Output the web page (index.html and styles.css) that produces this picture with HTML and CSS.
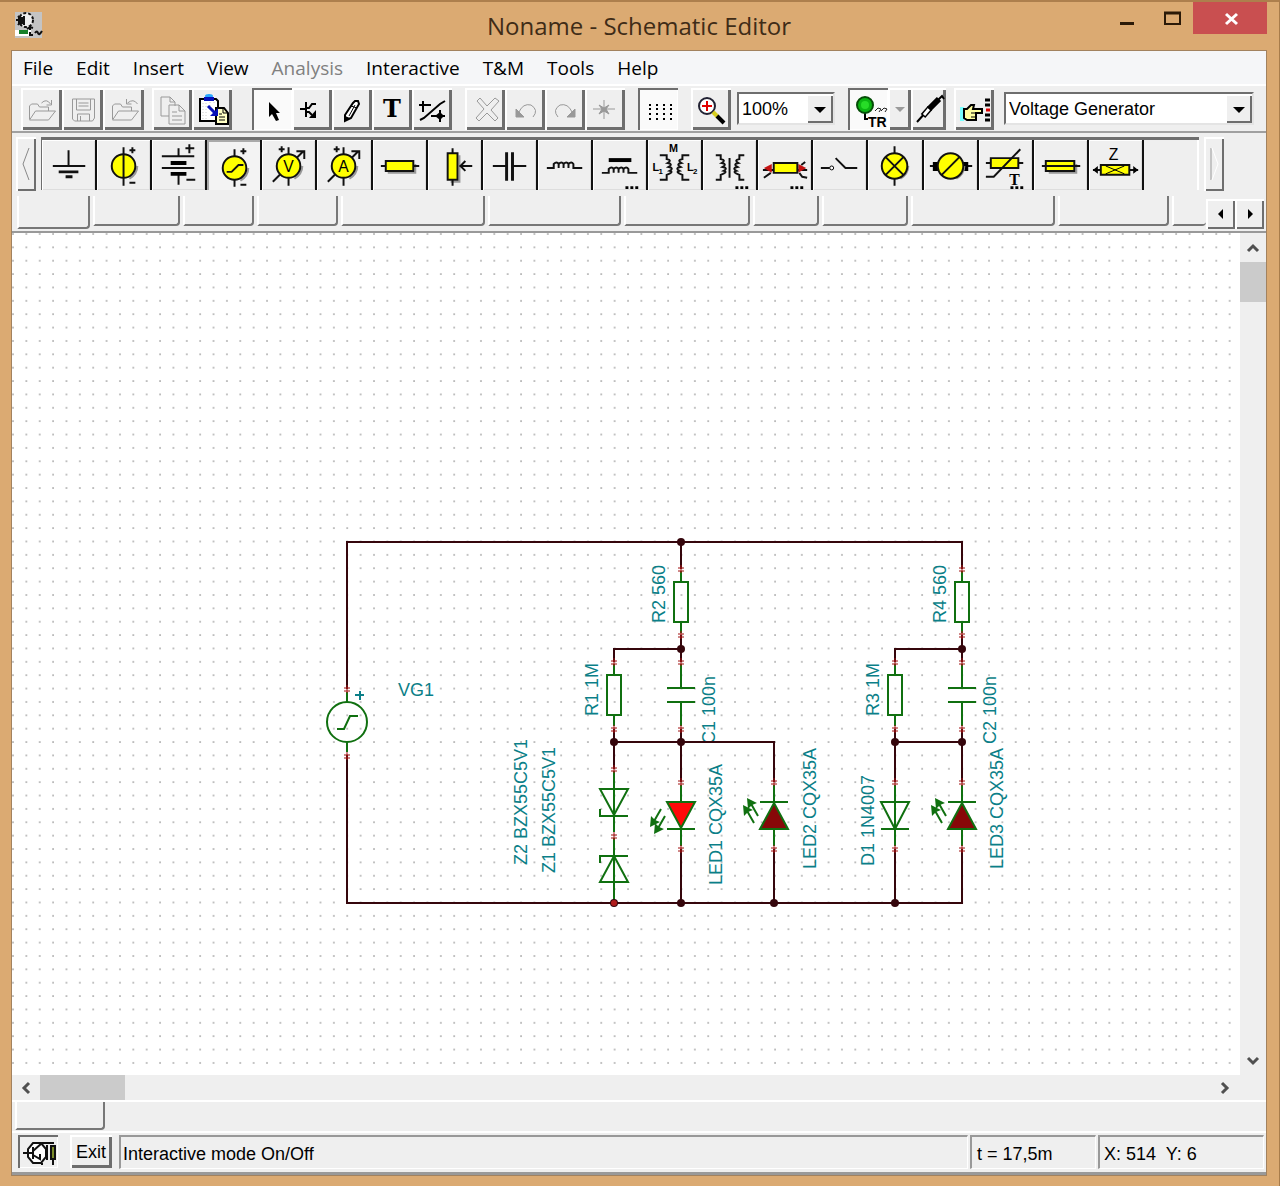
FILE: index.html
```
<!DOCTYPE html>
<html lang="en">
<head>
    <meta charset="UTF-8">
    <meta name="viewport" content="width=device-width, initial-scale=1.0">
    <title>Noname - Schematic Editor</title>
    <link rel="stylesheet" href="styles.css">
</head>
<body>
<div class="window">

    <header class="titlebar">
        <svg class="app-icon" width="28" height="28" viewBox="0 0 28 28">
            <rect x="0" y="1" width="27" height="26" fill="#c4c4c4"/>
            <circle cx="11" cy="9" r="7" fill="#eee" stroke="#111" stroke-width="2" stroke-dasharray="3 2"/>
            <path d="M1 9h8M3 5l4 4-4 5M9 5v9M15 15v7M12 18l3-2 3 1" stroke="#111" stroke-width="2" fill="none"/>
            <path d="M3 6h5v7H3z" fill="#111"/>
            <rect x="0" y="19" width="16" height="6" fill="#fff"/>
            <rect x="4" y="19" width="9" height="4" fill="#17802b"/>
            <path d="M15 21v3h3M20 22q2-3 3 0t4-2" stroke="#111" stroke-width="2" fill="none"/>
        </svg>
        <h1>Noname - Schematic Editor</h1>
        <div class="caption-buttons">
            <button class="caption" aria-label="Minimize"><svg width="40" height="32" viewBox="0 0 40 32"><path d="M16 21.500h14" stroke="#2b1a08" stroke-width="3"/></svg></button>
            <button class="caption" aria-label="Maximize"><svg width="40" height="32" viewBox="0 0 40 32"><path d="M15 11h15v11H15z" fill="none" stroke="#2b1a08" stroke-width="2"/><path d="M14 11h17" stroke="#2b1a08" stroke-width="3"/></svg></button>
            <button class="caption close" aria-label="Close"><svg width="40" height="32" viewBox="0 0 40 32"><path d="M16 12l11 10M27 12L16 22" stroke="#fff" stroke-width="3"/></svg></button>
        </div>
    </header>

    <main class="client">
        <nav class="menu">
            <button>File</button>
            <button>Edit</button>
            <button>Insert</button>
            <button>View</button>
            <button disabled>Analysis</button>
            <button>Interactive</button>
            <button>T&amp;M</button>
            <button>Tools</button>
            <button>Help</button>
        </nav>

        <div class="toolbar">
            <div class="group file">
                <button class="tool" aria-label="Open"><svg class="off" viewBox="0 0 40 42"><path d="M8 31V18l2-2h6l2 3h9v4M8 32l6-9h20l-7 9zM20 15q5-5 9 1M30 12v5h-5"/></svg></button>
                <button class="tool" aria-label="Save"><svg class="off" viewBox="0 0 40 42"><path d="M10 11h22v19l-2 3H12l-2-2zM14 11v11h14V11M16 15h10M16 18h10M15 33v-7h12v7M18 28v5"/></svg></button>
                <button class="tool" aria-label="Close file"><svg class="off" viewBox="0 0 40 42"><path d="M9 31V18l2-2h6l2 3h9v4M9 32l6-9h20l-7 9zM34 16q-4-6-10-1M23 11v5h5"/></svg></button>
            </div>
            <div class="group gap-s">
                <button class="tool" aria-label="Copy"><svg class="off" viewBox="0 0 40 42"><path d="M17 28H9V9h9l5 5v4M18 9v5h5M17 17h10l6 6v13H17zM27 17v6h6M20 24h5M20 28h10M20 32h10"/></svg></button>
                <button class="tool" aria-label="Paste"><svg viewBox="0 0 40 42"><path d="M8 33V11h16l2 2v20z" fill="#fff" stroke="#000" stroke-width="2"/><path d="M11 15v16M14 15v16M18 14v5M22 14v3" stroke="#ccc" stroke-dasharray="1 2"/><ellipse cx="17" cy="8" rx="4" ry="2" fill="#27a6ff"/><path d="M12 9h10v4H12z" fill="#0711b8"/><path d="M24 20h8l4 5v11H24z" fill="#ffffc4" stroke="#000" stroke-width="2"/><path d="M27 26h3M27 29h6M27 32h6M31 20v5h5" stroke="#000" fill="none"/><path d="M16 18l7 7" stroke="#0711b8" stroke-width="3"/><path d="M26 20v8h-8z" fill="#0711b8"/></svg></button>
            </div>
            <div class="group gap-l">
                <button class="tool pressed" aria-label="Select"><svg viewBox="0 0 40 42"><path d="M17 14v15l3-3 4 7 3-1-3-7h4z"/></svg></button>
                <button class="tool" aria-label="Wire"><svg viewBox="0 0 40 42"><path d="M8 21h6M14 14v15M14 20h3l3-4h4M14 24h3l3 3" fill="none" stroke="#000" stroke-width="2"/><path d="M24 22v8h-7z"/></svg></button>
                <button class="tool" aria-label="Draw"><svg viewBox="0 0 40 42"><path d="M21 15l2-2h3l1 3-8 14-6 3v-6z" fill="#fff" stroke="#000" stroke-width="2"/><path d="M19 18l6 2M17 28l6-11" stroke="#000"/><path d="M13 28l5 2-5 3z"/></svg></button>
                <button class="tool letter">T</button>
                <button class="tool" aria-label="Diagram"><svg viewBox="0 0 40 42"><path d="M7 17h3M11 13v11M12 17h7M8 32l4-2 16-14 5-3M19 28h14M28 22v12" fill="none" stroke="#000" stroke-width="2"/><path d="M23 28l5-4 4 4-4 4z"/></svg></button>
            </div>
            <div class="group gap-m">
                <button class="tool" aria-label="Delete"><svg class="off" viewBox="0 0 40 42"><path d="M12 13l3-3 7 8 8-8 4 3-8 9 7 8-3 3-8-8-8 8-3-3 8-9z"/></svg></button>
                <button class="tool" aria-label="Undo"><svg class="off" viewBox="0 0 40 42"><path d="M14 24q4-9 12-7 8 5 2 12" stroke-width="2"/><path class="dim" d="M11 21v8h8z"/></svg></button>
                <button class="tool" aria-label="Redo"><svg class="off" viewBox="0 0 40 42"><path d="M27 24q-4-9-12-7-8 5-2 12" stroke-width="2"/><path class="dim" d="M30 21v8h-8z"/></svg></button>
                <button class="tool" aria-label="Center"><svg class="off" viewBox="0 0 40 42"><path d="M8 21h22M19 12v19" stroke-width="2"/><path class="dim" d="M14 17l5 3 5-3-3 4 3 5-5-3-5 3 3-5z"/></svg></button>
            </div>
            <div class="group gap-m">
                <button class="tool pressed" aria-label="Grid"><svg viewBox="0 0 40 42"><path d="M11 17h23M11 21h23M11 26h23M11 31h23" stroke="#000" stroke-width="2" stroke-dasharray="2 5"/></svg></button>
            </div>
            <div class="group gap-m">
                <button class="tool" aria-label="Zoom"><svg viewBox="0 0 40 42"><circle cx="16" cy="18" r="8" fill="#fff" stroke="#223" stroke-width="2"/><path d="M11 18h10M16 13v10" stroke="#e00000" stroke-width="2"/><path d="M22 24l5 5" stroke="#d8d020" stroke-width="4"/><path d="M26 28l7 7" stroke="#000" stroke-width="4"/></svg></button>
            </div>
            <div class="combo zoom">
                <select aria-label="Zoom level"><option>100%</option></select>
            </div>
            <div class="group gap-m">
                <button class="tool pressed" aria-label="Transient mode"><svg viewBox="0 0 40 42"><path d="M17 25v6h3" fill="none" stroke="#000" stroke-width="2"/><circle cx="17" cy="17" r="8" fill="#0cb512" stroke="#064d08" stroke-width="2"/><circle cx="17" cy="17" r="4" fill="#27dc27"/><path d="M27 23l3-3 3 1-2 3M33 23l3-3 3 1-2 3" fill="none" stroke="#222"/><text class="tr" x="20" y="39">TR</text></svg></button>
                <button class="tool narrow" aria-label="Interactive modes"><svg viewBox="0 0 23 42"><path d="M7 19h10l-5 5z" fill="#9a9a9a"/></svg></button>
                <button class="tool probe" aria-label="Probe"><svg viewBox="0 0 35 42"><path d="M6 34l9-10M27 12l4-4 2 3" fill="none" stroke="#000" stroke-width="2"/><path d="M12 28l7-8" stroke="#000" stroke-width="6"/><path d="M13 27l5-6" stroke="#fff" stroke-width="3"/><path d="M18 21l10-10" stroke="#000" stroke-width="6"/></svg></button>
            </div>
            <div class="group gap-s">
                <button class="tool" aria-label="Find component"><svg viewBox="0 0 40 42"><path d="M6 19h4v14H6z" fill="#7ff"/><path d="M10 21h3l4-4h3l-1 4h9v4h-6v7h-9l-3-2z" fill="#ffffa0" stroke="#000" stroke-width="2"/><path d="M17 25h6M17 29h5" stroke="#000"/><path d="M31 12h5M31 17h5M31 27h5M31 32h5" stroke="#000" stroke-width="3"/><path d="M32 22h4" stroke="#d00" stroke-width="3"/></svg></button>
            </div>
            <div class="combo parts">
                <select aria-label="Component"><option>Voltage Generator</option></select>
            </div>
        </div>

        <div class="palette">
            <button class="pager" aria-label="Previous components"><svg width="12" height="36" viewBox="0 0 12 36"><path d="M9 2L3 18l6 16" fill="none" stroke="#888"/></svg></button>
            <div class="components">
                <button aria-label="Ground"><svg viewBox="0 0 54 50"><path class="ln" d="M27 10v15M11 26h33"/><path class="bar" d="M17 32h20M24 37h7"/></svg></button>
                <button aria-label="Voltage source"><svg viewBox="0 0 54 50"><path class="shade" d="M33 39q8-5 8-13"/><circle class="body" cx="27" cy="26" r="12"/><path class="ln" d="M27 7v39M33 10h6M36 7v6M33 43h6"/></svg></button>
                <button aria-label="Battery"><svg viewBox="0 0 54 50"><path class="ln" d="M27 8v8M10 16h33M10 28h33M27 35v10M34 8h9M38 4v9M35 40h9"/><path class="thick" d="M19 23h16M19 34h16"/></svg></button>
                <button class="pressed" aria-label="Voltage generator"><svg viewBox="0 0 54 50"><path class="shade" d="M34 41q8-5 8-13"/><circle class="body" cx="28" cy="28" r="12"/><path class="ln" d="M28 9v7M28 40v7M34 11h6M37 8v6M34 45h6M20 32h5l7-7h5"/></svg></button>
                <button aria-label="Voltmeter"><svg viewBox="0 0 54 50"><path class="shade" d="M33 39q8-5 8-13"/><path class="ln" d="M11 42L42 11M35 11h8v8M27 7v7M27 38v8M17 9h6M20 6v6"/><circle class="body" cx="27" cy="26" r="12"/><text class="sym" x="27" y="32">V</text></svg></button>
                <button aria-label="Ammeter"><svg viewBox="0 0 54 50"><path class="shade" d="M33 39q8-5 8-13"/><path class="ln" d="M11 42L42 11M35 11h8v8M27 7v7M27 38v8M17 9h6M20 6v6"/><circle class="body" cx="27" cy="26" r="12"/><text class="sym" x="27" y="32">A</text></svg></button>
                <button aria-label="Resistor"><svg viewBox="0 0 54 50"><path class="shade" d="M15 33h28V24"/><path class="ln" d="M8 26h39"/><path class="body" d="M13 21h28v10H13z"/></svg></button>
                <button aria-label="Potentiometer"><svg viewBox="0 0 54 50"><path class="shade" d="M23 42h9V15"/><path class="ln" d="M25 8v38M32 26h13M38 21l-5 5 5 5"/><path class="body" d="M20 13h10v27H20z"/></svg></button>
                <button aria-label="Capacitor"><svg viewBox="0 0 54 50"><path class="ln" d="M10 26h14M30 26h14"/><path class="bar" d="M24 12v29M30 12v29"/></svg></button>
                <button aria-label="Inductor"><svg viewBox="0 0 54 50"><path class="ln" d="M9 28h7v-4q3-3 5 0v4M21 24q3-3 5 0v4M26 24q3-3 5 0v4M31 24q3-3 5 0v4h9"/></svg></button>
                <button aria-label="Iron core inductor"><svg viewBox="0 0 54 50"><path class="thick" d="M16 20h23"/><path class="ln" d="M9 33h7v-4q3-3 5 0v4M21 29q3-3 5 0v4M26 29q3-3 5 0v4M31 29q3-3 5 0v4h9"/><path class="dots" d="M33 48h14"/></svg></button>
                <button aria-label="Coupled inductors"><svg viewBox="0 0 54 50"><path class="ln" d="M12 15h7v4q6 1 1 4 6 1 1 4 6 1 1 4 5 1-3 4v5h-7M42 15h-7v4q-6 1-1 4-6 1-1 4-6 1-1 4-5 1 3 4v5h7"/><text class="mini" x="26" y="12">M</text><text class="mini" x="8" y="31">L</text><text class="micro" x="13" y="34">1</text><text class="mini" x="43" y="31">L</text><text class="micro" x="48" y="34">2</text></svg></button>
                <button aria-label="Transformer"><svg viewBox="0 0 54 50"><path class="ln" d="M13 15h5v4q6 1 1 4 6 1 1 4 6 1 1 4 5 1-3 4v5h-5M42 15h-5v4q-6 1-1 4-6 1-1 4-6 1-1 4-5 1 3 4v5h5M27 18v20"/><path class="dots" d="M33 48h14"/></svg></button>
                <button aria-label="Fault resistor"><svg viewBox="0 0 54 50"><path class="ln" d="M5 30h45M6 38l7-5M42 33l3 4 5 1M44 25l4-3"/><path d="M6 28l8-4v9zM49 28l-8-4v9z" fill="#c41212"/><path class="body" d="M16 23h24v10H16z"/><path class="dots" d="M33 48h14"/></svg></button>
                <button aria-label="Switch"><svg viewBox="0 0 54 50"><path class="ln" d="M8 28h9M23 18l10 10h12"/><circle cx="19" cy="28" r="2" fill="#fff" stroke="#000"/></svg></button>
                <button aria-label="Lamp"><svg viewBox="0 0 54 50"><path class="shade" d="M33 39q8-5 8-13"/><circle class="body" cx="27" cy="26" r="13"/><path class="ln" d="M27 6v7M27 39v7M18 17l18 18M36 17L18 35"/></svg></button>
                <button aria-label="Motor"><svg viewBox="0 0 54 50"><path class="ln" d="M6 26h43"/><path d="M9 22h8v9H9zM37 22h8v9h-8z"/><path class="shade" d="M33 39q8-5 8-13"/><circle class="body" cx="27" cy="26" r="13"/><path class="ln" d="M18 35l18-18"/></svg></button>
                <button aria-label="Thermistor"><svg viewBox="0 0 54 50"><path class="ln" d="M7 23h38"/><path class="body" d="M12 18h28v10H12z"/><path class="ln" d="M7 37h8L42 9"/><text class="therm" x="36" y="45">T</text><path class="dots" d="M32 48h14"/></svg></button>
                <button aria-label="Fuse"><svg viewBox="0 0 54 50"><path class="shade" d="M15 33h28V24"/><path class="body" d="M12 21h29v10H12z"/><path class="ln" d="M8 26h39"/></svg></button>
                <button aria-label="Impedance"><svg viewBox="0 0 54 50"><path class="ln" d="M4 30h46"/><path d="M4 30l5-4v8zM50 30l-5-4v8z"/><path class="body" d="M12 25h29v10H12z"/><path d="M17 26l19 8M36 26l-19 8" stroke="#000"/><text class="zed" x="25" y="20">Z</text></svg></button>
            </div>
            <button class="pager" aria-label="Next components"><svg width="12" height="36" viewBox="0 0 12 36"><path d="M3 2v32" stroke="#999"/><path d="M4 2l6 16-6 16" fill="none" stroke="#fff"/></svg></button>
        </div>

        <div class="tab-row">
            <div class="tabs">
                <button class="active" aria-label="Basic"></button>
                <button aria-label="Switches"></button>
                <button aria-label="Meters"></button>
                <button aria-label="Sources"></button>
                <button aria-label="Semiconductors"></button>
                <button aria-label="Spice macros"></button>
                <button aria-label="Gates"></button>
                <button aria-label="Flip-flops"></button>
                <button aria-label="Logic"></button>
                <button aria-label="Converters"></button>
                <button aria-label="Analog control"></button>
                <button aria-label="Special"></button>
            </div>
            <button class="scroll-tab" aria-label="Scroll tabs left"><svg width="12" height="14" viewBox="0 0 12 14"><path d="M8 2v10L3 7z"/></svg></button>
            <button class="scroll-tab" aria-label="Scroll tabs right"><svg width="12" height="14" viewBox="0 0 12 14"><path d="M4 2v10l5-5z"/></svg></button>
        </div>

        <div class="workspace">
            <svg class="schematic">
                <defs>
                    <pattern id="grid" width="13.370" height="13.370" patternUnits="userSpaceOnUse">
                        <rect x="0.200" y="0.200" width="1.600" height="1.600" fill="#a6a6a6"/>
                    </pattern>
                    <path id="pin" class="pin" d="M-3-1h6M-3 2h6M0-4v8"/>
                    <path id="resistor" class="part" d="M0-31v11M-7-20H7v40H-7zM0 20v11"/>
                    <path id="capacitor" class="part" d="M0-31v24M-14-7h28M-14 7h28M0 7v24"/>
                    <g id="led-arrows">
                        <path class="part" d="M0 0l-8 14M4 7l-8 14"/>
                        <path class="head" d="M-11 18l1-11 4 4 5 2zM-7 25l1-11 4 4 5 2z"/>
                    </g>
                </defs>
                <rect width="100%" height="100%" fill="url(#grid)"/>

                <g transform="translate(-12 -233)">
                    <!-- labels -->
                    <g class="label">
                        <text x="398" y="696">VG1</text>
                        <text transform="translate(527 865) rotate(-90)">Z2 BZX55C5V1</text>
                        <text transform="translate(555 873) rotate(-90)">Z1 BZX55C5V1</text>
                        <text transform="translate(665 623) rotate(-90)">R2 560</text>
                        <text transform="translate(598 716) rotate(-90)">R1 1M</text>
                        <text transform="translate(715 744) rotate(-90)">C1 100n</text>
                        <text transform="translate(722 885) rotate(-90)">LED1 CQX35A</text>
                        <text transform="translate(816 869) rotate(-90)">LED2 CQX35A</text>
                        <text transform="translate(946 623) rotate(-90)">R4 560</text>
                        <text transform="translate(879 716) rotate(-90)">R3 1M</text>
                        <text transform="translate(996 744) rotate(-90)">C2 100n</text>
                        <text transform="translate(874 866) rotate(-90)">D1 1N4007</text>
                        <text transform="translate(1003 869) rotate(-90)">LED3 CQX35A</text>
                    </g>

                    <!-- wires -->
                    <path class="wire" d="M347 689V542H962V569M347 755V903H962V849M681 542v27M681 635v27M681 649H614v13M614 729v40M681 729v53M614 742H774v40M681 849v54M774 849v54
                        M962 635v27M962 649H895v13M895 729v53M962 729v53M895 742h67M895 849v54"/>

                    <!-- generator -->
                    <circle class="part" cx="347" cy="722" r="20"/>
                    <path class="part" d="M347 692v10M347 742v10M337 729h7l6-13h8"/>
                    <path class="plus" d="M355 695h9M360 691v9"/>

                    <use href="#resistor" x="681" y="602"/>
                    <use href="#resistor" x="962" y="602"/>
                    <use href="#resistor" x="614" y="695"/>
                    <use href="#resistor" x="895" y="695"/>
                    <use href="#capacitor" x="681" y="695"/>
                    <use href="#capacitor" x="962" y="695"/>

                    <!-- zeners -->
                    <path class="part" d="M614 771v61M614 838v65M600 789h28l-14 26zM600 809v7h28M600 863v-7h28M614 856l14 26h-28z"/>
                    <!-- led 1 -->
                    <path class="part" d="M681 785v61"/>
                    <path class="part lit" d="M667 802h28l-14 26z"/>
                    <path class="part" d="M667 829h28"/>
                    <use href="#led-arrows" x="661" y="809"/>
                    <!-- led 2, led 3 -->
                    <path class="part" d="M774 785v61M760 802h28M962 785v61M948 802h28"/>
                    <path class="part dark" d="M774 803l14 26h-28zM962 803l14 26h-28z"/>
                    <use href="#led-arrows" transform="translate(754 823) scale(1 -1)"/>
                    <use href="#led-arrows" transform="translate(942 823) scale(1 -1)"/>
                    <!-- d1 -->
                    <path class="part" d="M895 785v61M881 802h28l-14 27zM881 829h28"/>

                    <use href="#pin" x="347" y="689"/><use href="#pin" x="347" y="756"/>
                    <use href="#pin" x="681" y="569"/><use href="#pin" x="681" y="635"/>
                    <use href="#pin" x="681" y="662"/><use href="#pin" x="681" y="729"/>
                    <use href="#pin" x="681" y="782"/><use href="#pin" x="681" y="849"/>
                    <use href="#pin" x="614" y="662"/><use href="#pin" x="614" y="729"/>
                    <use href="#pin" x="614" y="769"/><use href="#pin" x="614" y="836"/>
                    <use href="#pin" x="774" y="782"/><use href="#pin" x="774" y="849"/>
                    <use href="#pin" x="962" y="569"/><use href="#pin" x="962" y="635"/>
                    <use href="#pin" x="962" y="662"/><use href="#pin" x="962" y="729"/>
                    <use href="#pin" x="962" y="782"/><use href="#pin" x="962" y="849"/>
                    <use href="#pin" x="895" y="662"/><use href="#pin" x="895" y="729"/>
                    <use href="#pin" x="895" y="782"/><use href="#pin" x="895" y="849"/>

                    <!-- junctions -->
                    <g class="node">
                        <circle cx="681" cy="542" r="4"/>
                        <circle cx="681" cy="649" r="4"/>
                        <circle cx="614" cy="742" r="4"/>
                        <circle cx="681" cy="742" r="4"/>
                        <circle cx="614" cy="903" r="4"/>
                        <circle cx="681" cy="903" r="4"/>
                        <circle cx="774" cy="903" r="4"/>
                        <circle cx="895" cy="903" r="4"/>
                        <circle cx="962" cy="649" r="4"/>
                        <circle cx="895" cy="742" r="4"/>
                        <circle cx="962" cy="742" r="4"/>
                    </g>
                    <circle cx="614" cy="903" r="3" fill="#b01c1c"/>
                </g>
            </svg>
            <div class="scrollbar vertical">
                <button aria-label="Scroll up"><svg width="14" height="12" viewBox="0 0 14 12"><path d="M2 9l5-5 5 5"/></svg></button>
                <div class="thumb"></div>
                <button class="end" aria-label="Scroll down"><svg width="14" height="12" viewBox="0 0 14 12"><path d="M2 3l5 5 5-5"/></svg></button>
            </div>
            <div class="scrollbar horizontal">
                <button aria-label="Scroll left"><svg width="12" height="14" viewBox="0 0 12 14"><path d="M9 2L4 7l5 5"/></svg></button>
                <div class="thumb"></div>
                <button class="end" aria-label="Scroll right"><svg width="12" height="14" viewBox="0 0 12 14"><path d="M3 2l5 5-5 5"/></svg></button>
            </div>
        </div>

        <div class="sheets"><button aria-label="Noname"></button></div>

        <footer class="status">
            <button class="interactive" aria-label="Interactive mode"><svg width="36" height="26" viewBox="0 0 36 26"><path d="M13 4h8l5 6v8l-5 6h-8l-5-6v-8z" fill="#fff" stroke="#111" stroke-width="2"/><path d="M3 14h9M13 8v12M13 12l9-8h12M13 16l7 4v-5M27 6v15M22 24v2" fill="none" stroke="#111" stroke-width="2"/><path d="M31 7h4v13h-4z" fill="#7b8c2a" stroke="#111" stroke-width="2"/><path d="M33 20v6" stroke="#111" stroke-width="2"/></svg></button>
            <button class="exit">Exit</button>
            <div class="hint">Interactive mode On/Off</div>
            <div class="time">t = 17,5m</div>
            <div class="coords">X: 514&nbsp; Y: 6</div>
        </footer>
    </main>
</div>
</body>
</html>
```

FILE: styles.css
```
* {
    box-sizing: border-box;
}

body {
    margin: 0;
    background: #dbaa72;
    font-family: "Liberation Sans", Arial, sans-serif;
    font-size: 18px;
    color: #000;
}

button {
    margin: 0;
    padding: 0;
    border: none;
    border-radius: 0;
    background: #efefef;
    font: inherit;
    color: inherit;
}

svg {
    display: block;
}

.window {
    display: flex;
    flex-direction: column;
    min-height: 100vh;
    padding: 0 12px 10px 11px;
    border-top: 2px solid #ad7f4d;
    border-right: 1px solid #a87c4b;
}

/* title bar */
.titlebar {
    display: grid;
    grid-template-columns: 1fr auto 1fr;
    height: 48px;
}

.app-icon {
    margin: 9px 0 0 4px;
}

.titlebar h1 {
    margin: 0;
    font: 24px/48px "Open Sans", "Segoe UI", sans-serif;
    color: #3f2c17;
}

.caption-buttons {
    display: flex;
    justify-content: flex-end;
    align-items: flex-start;
}

.caption {
    display: flex;
    justify-content: center;
    width: 46px;
    height: 32px;
    background: none;
}

.caption.close {
    width: 74px;
    background: #c94f50;
}

.client {
    flex: 1;
    display: flex;
    flex-direction: column;
    border: 1px solid #a2825f;
    background: #efefef;
}

/* menu */
.menu {
    display: flex;
    gap: 1px;
    height: 33px;
    background: #f5f6f8;
}

.menu button {
    padding: 0 11px;
    background: none;
    font: 19px/32px "Open Sans", "Segoe UI", sans-serif;
}

.menu button:disabled {
    color: #808080;
}

/* toolbar */
.toolbar {
    display: flex;
    align-items: center;
    height: 49px;
    padding: 0 12px 0 9px;
    border-top: 2px solid #fff;
    border-bottom: 2px solid #a0a0a0;
}

.group {
    display: flex;
}

.gap-s { margin-left: 8px; }
.gap-m { margin-left: 13px; }
.gap-l { margin-left: 20px; }

.tool {
    width: 40px;
    height: 42px;
    box-shadow: inset 2px 2px #fff, inset -3px -3px #6e6e6e;
}

.tool svg {
    width: 100%;
    height: 42px;
}

.file .tool { width: 41px; }
.tool.narrow { width: 23px; }
.tool.probe { width: 35px; }

.tool.pressed {
    background: #fafafa;
    box-shadow: inset 2px 2px #6e6e6e, inset -1px -1px #fff;
}

.tool.letter {
    font: bold 24px/40px "DejaVu Serif", serif;
}

.off path {
    fill: none;
    stroke: #999;
    stroke-width: 1;
}

.off path.dim {
    fill: #999;
}

.tr {
    font: bold 14px "Liberation Sans", Arial, sans-serif;
}

.combo {
    position: relative;
    height: 33px;
}

.combo select {
    width: 100%;
    height: 33px;
    padding: 0 24px 0 3px;
    border: 2px solid #6e6e6e;
    border-right-color: #e4e4e4;
    border-bottom-color: #e4e4e4;
    border-radius: 0;
    background: #fff;
    appearance: none;
    font: 18px "Liberation Sans", Arial, sans-serif;
    color: #000;
}

/* drop-down arrow box */
.combo::before {
    content: "";
    position: absolute;
    top: 3px;
    right: 2px;
    width: 26px;
    height: 28px;
    background: #efefef;
    box-shadow: inset 1px 1px #fff, inset -2px -2px #6e6e6e;
    pointer-events: none;
}

.combo::after {
    content: "";
    position: absolute;
    top: 15px;
    right: 9px;
    border: 6px solid transparent;
    border-top-color: #000;
    border-bottom: none;
    pointer-events: none;
}

.combo.zoom {
    width: 98px;
    margin-left: 6px;
}

.combo.parts {
    flex: 1;
    margin-left: 10px;
}

/* component palette */
.palette {
    display: flex;
    gap: 5px;
    height: 60px;
    padding: 4px 42px 2px 4px;
}

.pager {
    display: flex;
    justify-content: center;
    align-items: center;
    width: 20px;
    box-shadow: inset 2px 2px #fff, inset -2px -2px #6e6e6e;
}

.components {
    flex: 1;
    display: grid;
    grid-template-columns: repeat(21, 1fr);
    height: 53px;
    border-top: 3px solid #6e6e6e;
    border-left: 1px solid #6e6e6e;
    box-shadow: inset -2px 0 #fff;
}

.components button {
    border-right: 2px solid #111;
    box-shadow: inset 1px 1px #fff, inset -1px -1px #ddd;
}

.components button.pressed {
    background: #f3f3f3;
    box-shadow: inset 2px 2px #aaa;
}

.components svg {
    width: 100%;
    height: 50px;
}

.ln {
    fill: none;
    stroke: #111;
    stroke-width: 2;
}

.bar {
    fill: none;
    stroke: #111;
    stroke-width: 3;
}

.thick {
    stroke: #000;
    stroke-width: 4;
}

.dots {
    stroke: #000;
    stroke-width: 3;
    stroke-dasharray: 3 2;
}

.body {
    fill: #ff0;
    stroke: #111;
    stroke-width: 2;
}

.shade {
    fill: none;
    stroke: #999;
    stroke-width: 2;
}

.components text {
    font: 16px "Liberation Sans", Arial, sans-serif;
    text-anchor: middle;
}

.components text.mini {
    font-size: 11px;
    font-weight: bold;
}

.components text.micro {
    font-size: 8px;
    font-weight: bold;
}

.components text.therm {
    font: bold 16px "Liberation Serif", serif;
}

/* component tabs */
.tab-row {
    display: flex;
    height: 40px;
    padding: 3px 2px 0 5px;
    border-bottom: 2px solid #999;
}

.tabs {
    flex: 1;
    display: grid;
    grid-template-columns: 73px 87px 71px 81px 144px 133px 126px 66px 86px 144px 111px 1fr;
    column-gap: 3px;
    overflow: hidden;
}

.tabs button,
.sheets button {
    height: 30px;
    border-left: 2px solid #fff;
    border-right: 2px solid #777;
    border-bottom: 2px solid #777;
    border-bottom-right-radius: 4px;
}

.tabs button.active {
    height: 33px;
}

.tabs button:last-child {
    border-right: none;
}

.scroll-tab {
    display: flex;
    justify-content: center;
    align-items: center;
    width: 29px;
    height: 30px;
    margin-top: 3px;
    box-shadow: inset 2px 2px #fff, inset -2px -2px #6e6e6e;
}

/* drawing area */
.workspace {
    flex: 1;
    display: grid;
    grid-template-columns: 1fr 26px;
    grid-template-rows: 1fr 25px;
}

.schematic {
    width: 100%;
    height: 100%;
    min-height: 700px;
    background: #fff;
}

.label {
    fill: #0b7f88;
    font: 18px "Liberation Sans", Arial, sans-serif;
}

.wire {
    fill: none;
    stroke: #35060c;
    stroke-width: 2;
}

.part {
    fill: none;
    stroke: #107010;
    stroke-width: 2;
}

.part.lit {
    fill: #ff0a0a;
}

.part.dark {
    fill: #870808;
}

.head {
    fill: #107010;
}

.plus {
    stroke: #0b7f88;
    stroke-width: 2;
}

.pin {
    fill: none;
    stroke: #a01010;
    stroke-width: 1;
}

.node circle {
    fill: #35060c;
}

.scrollbar {
    display: flex;
}

.scrollbar.vertical {
    flex-direction: column;
}

.scrollbar.horizontal {
    padding-right: 1px;
}

.scrollbar button {
    display: flex;
    justify-content: center;
    align-items: center;
    width: 28px;
    height: 25px;
}

.scrollbar.vertical button {
    width: 26px;
    height: 29px;
}

.scrollbar path {
    fill: none;
    stroke: #505050;
    stroke-width: 3;
}

.scrollbar .end {
    margin-left: auto;
}

.scrollbar.vertical .end {
    margin: auto 0 0;
}

.thumb {
    background: #cbcbcb;
}

.vertical .thumb {
    height: 40px;
}

.horizontal .thumb {
    width: 85px;
}

/* sheet tabs */
.sheets {
    height: 33px;
    padding-left: 3px;
    border-top: 2px solid #fff;
    border-bottom: 2px solid #fff;
}

.sheets button {
    display: block;
    width: 90px;
    height: 28px;
}

/* status bar */
.status {
    display: flex;
    gap: 2px;
    height: 42px;
    padding: 2px 2px 3px 6px;
    border-bottom: 3px solid #999;
    line-height: 34px;
}

.interactive {
    width: 40px;
    height: 33px;
    padding: 2px;
    box-shadow: inset 2px 2px #6e6e6e, inset -1px -1px #fff;
}

.exit {
    width: 42px;
    height: 33px;
    margin: 0 5px 0 10px;
    box-shadow: inset 2px 2px #fff, inset -3px -3px #6e6e6e;
}

.hint,
.time,
.coords {
    padding-left: 2px;
    border: 1px solid #fff;
    border-top: 2px solid #999;
    border-left: 2px solid #999;
}

.hint {
    flex: 1;
}

.time {
    width: 126px;
    padding-left: 5px;
}

.coords {
    width: 166px;
    padding-left: 4px;
}
```
